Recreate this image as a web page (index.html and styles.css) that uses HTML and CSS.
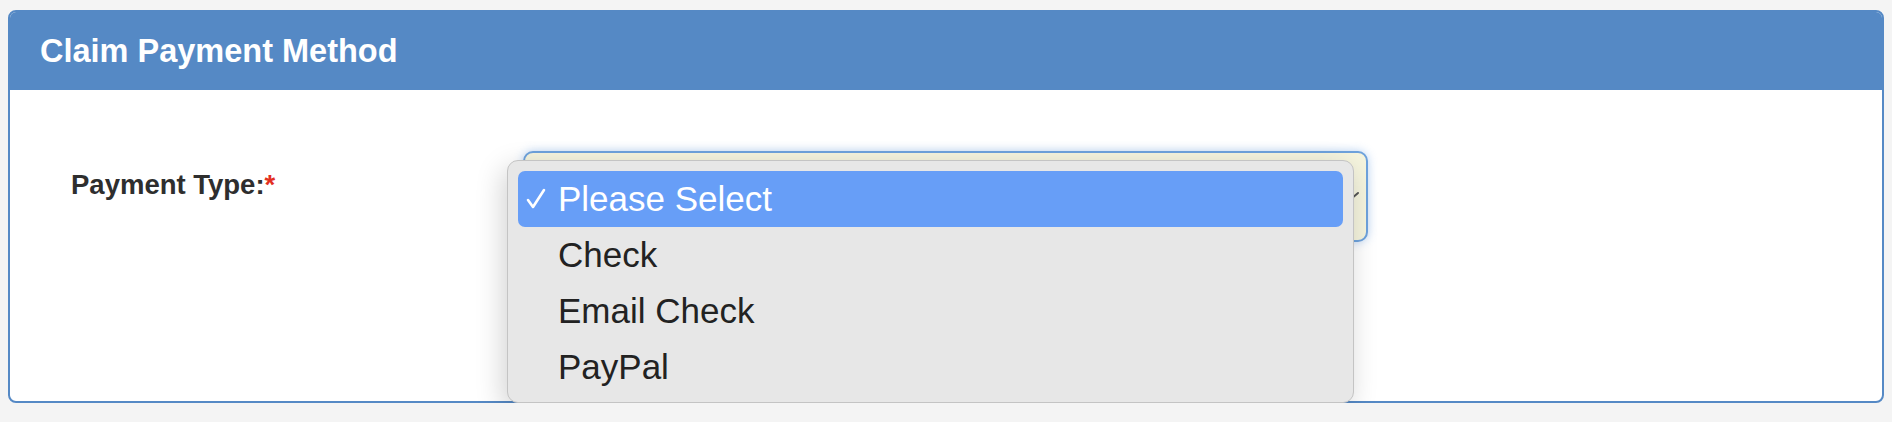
FILE: index.html
```html
<!DOCTYPE html>
<html lang="en">
<head>
<meta charset="UTF-8">
<title>Claim Payment Method</title>
<link rel="stylesheet" href="styles.css">
</head>
<body>

<!-- payment method panel -->
<div class="panel">
    <div class="panel-header">Claim Payment Method</div>
    <div class="panel-body">
        <div class="form-row">
            <div class="field-label">Payment Type:<span class="required">*</span></div>
            <div class="select-wrap">
                <div class="select-box">
                    <svg class="chevron" width="18" height="10" viewBox="0 0 18 10">
                        <polyline points="2,2 9,8 16,2" fill="none" stroke="#555" stroke-width="2" stroke-linecap="round" stroke-linejoin="round"/>
                    </svg>
                </div>

                <!-- open dropdown list -->
                <div class="option-list">
                    <div class="option selected">
                        <svg class="check" width="20" height="22" viewBox="0 0 20 22">
                            <polyline points="2,12 7,19 18,2" fill="none" stroke="white" stroke-width="2.6" stroke-linecap="round" stroke-linejoin="round"/>
                        </svg>
                        <span>Please Select</span>
                    </div>
                    <div class="option"><span>Check</span></div>
                    <div class="option"><span>Email Check</span></div>
                    <div class="option"><span>PayPal</span></div>
                </div>
            </div>
        </div>
    </div>
</div>

</body>
</html>
```

FILE: styles.css
```css
body, html {
    margin: 0;
    background-color: #f4f4f4;
    font-family: 'Liberation Sans', Arial, sans-serif;
}

.panel {
    margin: 10px 8px 0;
    border: 2px solid #5589c5;
    border-radius: 8px;
    background-color: white;
}

.panel-header {
    background-color: #5589c5;
    color: white;
    font-size: 32.5px;
    font-weight: bold;
    height: 78px;
    line-height: 78px;
    padding-left: 30px;
    border-radius: 6px 6px 0 0;
}

.panel-body {
    height: 311px;
    padding: 61px 0 0 61px;
    box-sizing: border-box;
}

.form-row {
    display: flex;
    align-items: flex-start;
}

.field-label {
    flex: 0 0 452px;
    margin-top: 19px;
    font-size: 27.5px;
    line-height: 30px;
    font-weight: bold;
    color: #2e2e2e;
}

.required {
    color: #e3301f;
}

.select-wrap {
    position: relative;
}

.select-box {
    width: 845px;
    height: 91px;
    box-sizing: border-box;
    background-color: #f5f4de;
    border: 2px solid #6ea2dc;
    border-radius: 10px;
    box-shadow: 0 0 10px rgba(102, 160, 230, 0.45);
    display: flex;
    justify-content: flex-end;
    align-items: center;
    padding-right: 6px;
}

.chevron {
    margin-top: -2px;
}

.option-list {
    position: absolute;
    left: -16px;
    top: 9px;
    width: 847px;
    height: 243px;
    box-sizing: border-box;
    padding: 10px 10px 0 10px;
    background-color: #e7e7e7;
    border: 1px solid #c4c4c4;
    border-radius: 11px;
    box-shadow: -4px 8px 28px rgba(0, 0, 0, 0.18);
}

.option {
    height: 56px;
    display: flex;
    align-items: center;
    padding-left: 40px;
    font-size: 35px;
    color: #222;
    border-radius: 7px;
    position: relative;
}

.option.selected {
    background-color: #679ef7;
    color: white;
}

.check {
    position: absolute;
    left: 8px;
    top: 17px;
}
```
